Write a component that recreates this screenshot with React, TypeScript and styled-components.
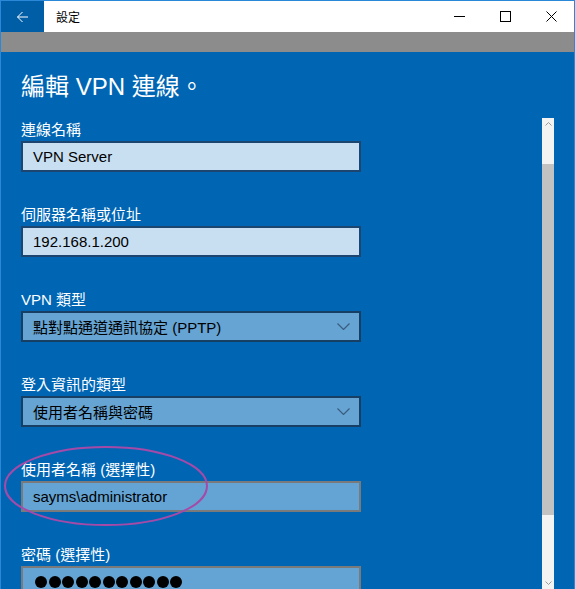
import React from 'react'
import styled, { createGlobalStyle } from 'styled-components'

const GlobalStyle = createGlobalStyle`
    html, body {
        margin: 0;
        padding: 0;
        background: #ffffff;
    }
`

const FONT = `"Liberation Sans", "Noto Sans CJK TC", sans-serif`

type Variant = 'text' | 'select' | 'active'

type Field = {
    label: string
    value?: string
    variant: Variant
    password?: boolean
}

const fields: Field[] = [
    { label: '連線名稱', value: 'VPN Server', variant: 'text' },
    { label: '伺服器名稱或位址', value: '192.168.1.200', variant: 'text' },
    { label: 'VPN 類型', value: '點對點通道通訊協定 (PPTP)', variant: 'select' },
    { label: '登入資訊的類型', value: '使用者名稱與密碼', variant: 'select' },
    { label: '使用者名稱 (選擇性)', value: 'sayms\\administrator', variant: 'active' },
    { label: '密碼 (選擇性)', variant: 'active', password: true },
]

const App: React.FC = () => {
    return (
        <>
            <GlobalStyle />
            <Window>
                <TitleBar>
                    <BackButton>
                        <svg width="13" height="12" viewBox="0 0 13 12">
                            <path d="M12 6H1.5M6.5 1L1.5 6l5 5" stroke="#fff" strokeWidth="1" fill="none" />
                        </svg>
                    </BackButton>
                    <Title>設定</Title>
                    <Caption>
                        <svg width="11" height="11" viewBox="0 0 11 11">
                            <path d="M0 5.5h11" stroke="#000" strokeWidth="1" />
                        </svg>
                    </Caption>
                    <Caption>
                        <svg width="11" height="11" viewBox="0 0 11 11">
                            <rect x="0.5" y="0.5" width="10" height="10" stroke="#000" strokeWidth="1" fill="none" />
                        </svg>
                    </Caption>
                    <Caption>
                        <svg width="11" height="11" viewBox="0 0 11 11">
                            <path d="M0.5 0.5l10 10M10.5 0.5l-10 10" stroke="#000" strokeWidth="1" fill="none" />
                        </svg>
                    </Caption>
                </TitleBar>
                <GrayBar />
                <Body>
                    <Heading>編輯 VPN 連線。</Heading>
                    <Row>
                        <Form>
                            {fields.map((f) => (
                                <FieldGroup key={f.label}>
                                    <Label>{f.label}</Label>
                                    <InputBox $variant={f.variant}>
                                        {f.password ? (
                                            <Dots>
                                                {Array.from({ length: 11 }).map((_, i) => <Dot key={i} />)}
                                            </Dots>
                                        ) : (
                                            <Value>{f.value}</Value>
                                        )}
                                        {f.variant === 'select' && (
                                            <svg width="13" height="7" viewBox="0 0 13 7">
                                                <path d="M0.5 0.5l6 6 6-6" stroke="#3a5d80" strokeWidth="1.2" fill="none" />
                                            </svg>
                                        )}
                                    </InputBox>
                                </FieldGroup>
                            ))}
                        </Form>
                        <ScrollBar>
                            <ScrollArrow>
                                <svg width="7" height="4" viewBox="0 0 7 4">
                                    <path d="M0.5 3.5l3-3 3 3" stroke="#9a9a9a" strokeWidth="1" fill="none" />
                                </svg>
                            </ScrollArrow>
                            <TrackGap $h={34} />
                            <Thumb $h={351} />
                            <TrackGap $h={0} $grow />
                            <ScrollArrow>
                                <svg width="7" height="4" viewBox="0 0 7 4">
                                    <path d="M0.5 0.5l3 3 3-3" stroke="#9a9a9a" strokeWidth="1" fill="none" />
                                </svg>
                            </ScrollArrow>
                        </ScrollBar>
                    </Row>
                </Body>
                <Annotation width="206" height="82" viewBox="0 0 206 82">
                    <ellipse cx="103" cy="41" rx="101" ry="39" stroke="#a64aa8" strokeWidth="2" fill="none" />
                </Annotation>
            </Window>
        </>
    )
}

const Window = styled.div`
    position: relative;
    width: 575px;
    height: 589px;
    box-sizing: border-box;
    border: 1px solid #2b88d8;
    border-bottom: none;
    overflow: hidden;
    display: flex;
    flex-direction: column;
    font-family: ${FONT};
`

const TitleBar = styled.div`
    height: 31px;
    flex-shrink: 0;
    display: flex;
    align-items: center;
    background: #ffffff;
`

const BackButton = styled.div`
    width: 43px;
    height: 100%;
    background: #005ea6;
    display: flex;
    align-items: center;
    justify-content: center;
`

const Title = styled.div`
    flex: 1;
    margin-left: 12px;
    font-size: 12px;
    color: #000;
`

const Caption = styled.div`
    width: 46px;
    height: 100%;
    display: flex;
    align-items: center;
    justify-content: center;
`

const GrayBar = styled.div`
    height: 20px;
    flex-shrink: 0;
    background: #8c8c8c;
`

const Body = styled.div`
    flex: 1;
    min-height: 0;
    background: #0066b4;
    display: flex;
    flex-direction: column;
    padding: 19px 0 0 20px;
`

const Heading = styled.h1`
    margin: 0 0 15px;
    font-size: 24px;
    line-height: 32px;
    font-weight: 400;
    color: #ffffff;
`

const Row = styled.div`
    flex: 1;
    min-height: 0;
    display: flex;
`

const Form = styled.div`
    flex: 1;
    padding-top: 2px;
    display: flex;
    flex-direction: column;
`

const FieldGroup = styled.div`
    margin-bottom: 33px;
`

const Label = styled.div`
    font-size: 15px;
    line-height: 20px;
    color: #ffffff;
    margin-bottom: 1px;
`

const boxStyles: Record<Variant, { bg: string; border: string }> = {
    text: { bg: '#c8dff1', border: '#1c4670' },
    select: { bg: '#66a4d3', border: '#173e63' },
    active: { bg: '#63a4d4', border: '#7a7a7a' },
}

const InputBox = styled.div<{ $variant: Variant }>`
    width: 340px;
    height: 31px;
    box-sizing: border-box;
    border: 2px solid ${p => boxStyles[p.$variant].border};
    background: ${p => boxStyles[p.$variant].bg};
    display: flex;
    align-items: center;
    justify-content: space-between;
    padding: 0 9px 0 10px;
`

const Value = styled.span`
    font-size: 15px;
    color: #000;
`

const Dots = styled.div`
    display: flex;
    gap: 1.5px;
    padding-left: 2px;
`

const Dot = styled.span`
    width: 12px;
    height: 12px;
    border-radius: 50%;
    background: #000;
`

const ScrollBar = styled.div`
    width: 12px;
    margin-right: 20px;
    background: #f3f3f3;
    display: flex;
    flex-direction: column;
`

const ScrollArrow = styled.div`
    height: 12px;
    flex-shrink: 0;
    display: flex;
    align-items: center;
    justify-content: center;
`

const TrackGap = styled.div<{ $h: number; $grow?: boolean }>`
    height: ${p => p.$h}px;
    flex: ${p => (p.$grow ? 1 : '0 0 auto')};
`

const Thumb = styled.div<{ $h: number }>`
    height: ${p => p.$h}px;
    flex-shrink: 0;
    background: #c2c2c2;
`

const Annotation = styled.svg`
    position: absolute;
    left: 2px;
    top: 444px;
    pointer-events: none;
`

export default App
